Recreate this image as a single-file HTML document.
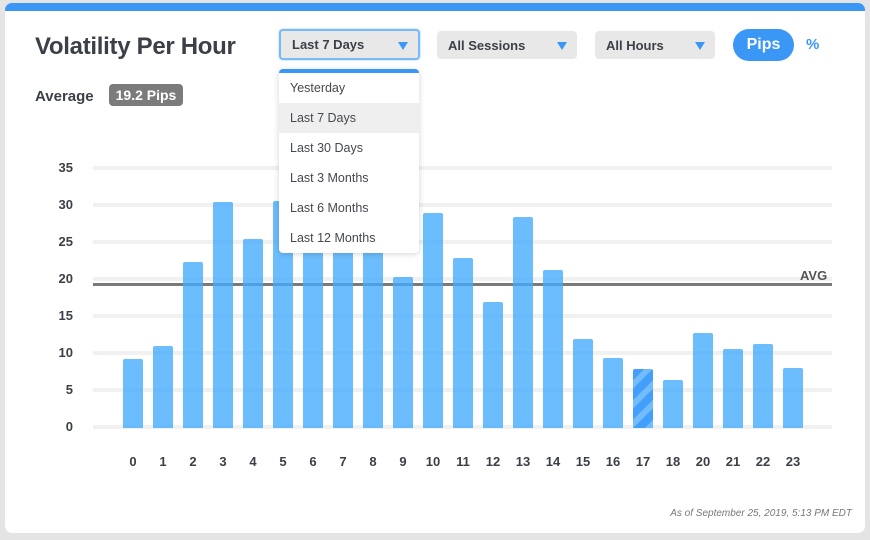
<!DOCTYPE html>
<html><head><meta charset="utf-8"><style>
*{margin:0;padding:0;box-sizing:border-box}
body{width:870px;height:540px;background:#e4e4e4;font-family:"Liberation Sans",sans-serif;position:relative;overflow:hidden}
.card{position:absolute;left:5px;top:3px;width:860px;height:530px;background:#fff;border-radius:7px;overflow:hidden}
.bar-top{position:absolute;left:0;top:0;width:100%;height:8px;background:#3a97f5}
.abs{position:absolute}
h1{position:absolute;left:30px;top:30px;font-size:24px;font-weight:bold;color:#3b3f47;letter-spacing:-0.3px}
.sel{position:absolute;height:28px;background:#e8e8e8;border-radius:4px;font-size:13px;font-weight:bold;color:#3b3f47;padding:7px 0 0 11px}
.sel i{position:absolute;right:10px;top:11px;width:0;height:0;border-left:5px solid transparent;border-right:5px solid transparent;border-top:8px solid #3a97f5}
.menu{position:absolute;left:274px;top:66px;width:140px;height:184px;background:#fff;border-radius:4px;box-shadow:0 1px 6px rgba(0,0,0,.18);border-top:4px solid #3a97f5;overflow:hidden}
.menu div{height:30px;font-size:12.5px;color:#454850;padding:8px 0 0 11px}
.y{position:absolute;left:28px;font-size:13px;font-weight:bold;color:#3b3f47;width:40px;text-align:right}
.g{position:absolute;left:88px;width:739px;height:4px;background:#f1f1f1}
.b{position:absolute;width:20px;background:rgba(66,170,252,0.78);border-radius:2px 2px 0 0}
.x{position:absolute;top:451px;width:30px;text-align:center;font-size:13px;font-weight:bold;color:#3b3f47}
</style></head><body>
<div class="card">
<div class="bar-top"></div>
<h1>Volatility Per Hour</h1>
<div class="sel" style="left:274px;top:26px;width:141px;height:31px;border:2px solid #7ab9f7;box-shadow:0 0 2px #9ccaf8;padding-top:6px">Last 7 Days<i></i></div>
<div class="sel" style="left:432px;top:28px;width:140px">All Sessions<i></i></div>
<div class="sel" style="left:590px;top:28px;width:120px">All Hours<i></i></div>
<div class="abs" style="left:728px;top:26px;width:61px;height:32px;border-radius:16px;background:#3a97f5;color:#fff;font-weight:bold;font-size:16px;text-align:center;line-height:32px">Pips</div>
<div class="abs" style="left:801px;top:33px;color:#3a97f5;font-weight:bold;font-size:15px">%</div>
<div class="abs" style="left:30px;top:85px;font-size:15px;font-weight:bold;color:#3b3f47">Average</div>
<div class="abs" style="left:104px;top:81px;width:74px;height:22px;border-radius:4px;background:#7b7b7b;color:#fff;font-weight:bold;font-size:14px;text-align:center;line-height:22px">19.2 Pips</div>

<div class="y" style="top:157px">35</div><div class="g" style="top:163px"></div>
<div class="y" style="top:194px">30</div><div class="g" style="top:200px"></div>
<div class="y" style="top:231px">25</div><div class="g" style="top:237px"></div>
<div class="y" style="top:268px">20</div><div class="g" style="top:274px"></div>
<div class="y" style="top:305px">15</div><div class="g" style="top:311px"></div>
<div class="y" style="top:342px">10</div><div class="g" style="top:348px"></div>
<div class="y" style="top:379px">5</div><div class="g" style="top:385px"></div>
<div class="y" style="top:416px">0</div><div class="g" style="top:422px"></div>
<div class="abs" style="left:88px;top:280px;width:739px;height:3px;background:#7a7a7a"></div>
<div class="abs" style="left:795px;top:265px;font-size:13px;font-weight:bold;color:#555">AVG</div>

<div class="b" style="left:118px;top:356px;height:69px"></div>
<div class="b" style="left:148px;top:343px;height:82px"></div>
<div class="b" style="left:178px;top:259px;height:166px"></div>
<div class="b" style="left:208px;top:199px;height:226px"></div>
<div class="b" style="left:238px;top:236px;height:189px"></div>
<div class="b" style="left:268px;top:198px;height:227px"></div>
<div class="b" style="left:298px;top:232px;height:193px"></div>
<div class="b" style="left:328px;top:242px;height:183px"></div>
<div class="b" style="left:358px;top:237px;height:188px"></div>
<div class="b" style="left:388px;top:274px;height:151px"></div>
<div class="b" style="left:418px;top:210px;height:215px"></div>
<div class="b" style="left:448px;top:255px;height:170px"></div>
<div class="b" style="left:478px;top:299px;height:126px"></div>
<div class="b" style="left:508px;top:214px;height:211px"></div>
<div class="b" style="left:538px;top:267px;height:158px"></div>
<div class="b" style="left:568px;top:336px;height:89px"></div>
<div class="b" style="left:598px;top:355px;height:70px"></div>
<div class="b" style="left:628px;top:366px;height:59px;background:repeating-linear-gradient(135deg,#429ffc 0 8px,#72bcfc 8px 14px)"></div>
<div class="b" style="left:658px;top:377px;height:48px"></div>
<div class="b" style="left:688px;top:330px;height:95px"></div>
<div class="b" style="left:718px;top:346px;height:79px"></div>
<div class="b" style="left:748px;top:341px;height:84px"></div>
<div class="b" style="left:778px;top:365px;height:60px"></div>

<div class="x" style="left:113px">0</div><div class="x" style="left:143px">1</div><div class="x" style="left:173px">2</div><div class="x" style="left:203px">3</div><div class="x" style="left:233px">4</div><div class="x" style="left:263px">5</div><div class="x" style="left:293px">6</div><div class="x" style="left:323px">7</div><div class="x" style="left:353px">8</div><div class="x" style="left:383px">9</div><div class="x" style="left:413px">10</div><div class="x" style="left:443px">11</div><div class="x" style="left:473px">12</div><div class="x" style="left:503px">13</div><div class="x" style="left:533px">14</div><div class="x" style="left:563px">15</div><div class="x" style="left:593px">16</div><div class="x" style="left:623px">17</div><div class="x" style="left:653px">18</div><div class="x" style="left:683px">20</div><div class="x" style="left:713px">21</div><div class="x" style="left:743px">22</div><div class="x" style="left:773px">23</div>

<div class="menu">
<div>Yesterday</div>
<div style="background:#efefef">Last 7 Days</div>
<div>Last 30 Days</div>
<div>Last 3 Months</div>
<div>Last 6 Months</div>
<div>Last 12 Months</div>
</div>
<div class="abs" style="right:13px;top:505px;font-size:10px;font-style:italic;color:#777">As of September 25, 2019, 5:13 PM EDT</div>
</div>
</body></html>
